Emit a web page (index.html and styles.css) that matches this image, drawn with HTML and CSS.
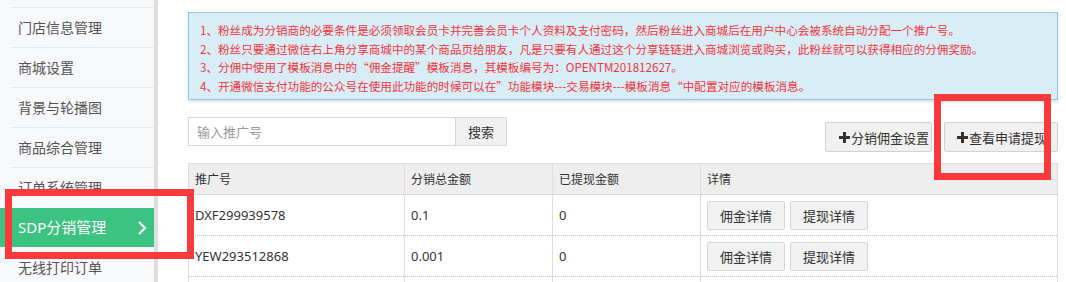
FILE: index.html
```html
<!DOCTYPE html>
<html lang="zh-CN">
<head>
  <meta charset="UTF-8" />
  <title>SDP分销管理</title>
  <link rel="stylesheet" href="styles.css">
</head>
<body>

  <div class="layout">
    <!-- 左侧菜单 -->
    <div class="sidebar">
      <div class="nav-item">门店信息管理</div>
      <div class="nav-item">商城设置</div>
      <div class="nav-item">背景与轮播图</div>
      <div class="nav-item">商品综合管理</div>
      <div class="nav-item">订单系统管理</div>
      <div class="nav-item active">
        SDP分销管理
        <svg class="chev" width="10" height="14" viewBox="0 0 10 14"><polyline points="2,1 8,7 2,13" fill="none" stroke="#fff" stroke-width="2.2"/></svg>
      </div>
      <div class="nav-item">无线打印订单</div>
    </div>

    <!-- 内容 -->
    <div class="main">
      <div class="notice">
        <p>1、粉丝成为分销商的必要条件是必须领取会员卡并完善会员卡个人资料及支付密码，然后粉丝进入商城后在用户中心会被系统自动分配一个推广号。</p>
        <p>2、粉丝只要通过微信右上角分享商城中的某个商品页给朋友，凡是只要有人通过这个分享链链进入商城浏览或购买，此粉丝就可以获得相应的分佣奖励。</p>
        <p>3、分佣中使用了模板消息中的“佣金提醒”模板消息，其模板编号为：OPENTM201812627。</p>
        <p>4、开通微信支付功能的公众号在使用此功能的时候可以在”功能模块---交易模块---模板消息“中配置对应的模板消息。</p>
      </div>

      <div class="toolbar">
        <div class="search">
          <input type="text" placeholder="输入推广号">
          <button class="btn-search">搜索</button>
        </div>
        <div class="actions">
          <button class="btn"><svg width="11" height="11" viewBox="0 0 11 11"><rect x="4" y="0" width="3" height="11" fill="#333"/><rect x="0" y="4" width="11" height="3" fill="#333"/></svg>分销佣金设置</button>
          <button class="btn wide"><svg width="11" height="11" viewBox="0 0 11 11"><rect x="4" y="0" width="3" height="11" fill="#333"/><rect x="0" y="4" width="11" height="3" fill="#333"/></svg>查看申请提现</button>
        </div>
      </div>

      <table class="list">
        <thead>
          <tr>
            <th class="c1">推广号</th>
            <th class="c2">分销总金额</th>
            <th class="c3">已提现金额</th>
            <th>详情</th>
          </tr>
        </thead>
        <tbody>
          <tr>
            <td>DXF299939578</td>
            <td>0.1</td>
            <td>0</td>
            <td><button class="btn-sm">佣金详情</button><button class="btn-sm">提现详情</button></td>
          </tr>
          <tr>
            <td>YEW293512868</td>
            <td>0.001</td>
            <td>0</td>
            <td><button class="btn-sm">佣金详情</button><button class="btn-sm">提现详情</button></td>
          </tr>
          <tr>
            <td></td>
            <td></td>
            <td></td>
            <td></td>
          </tr>
        </tbody>
      </table>
    </div>
  </div>

  <!-- 标注框 -->
  <div class="mark mark-nav"></div>
  <div class="mark mark-btn"></div>

</body>
</html>
```

FILE: styles.css
```css
* { margin: 0; padding: 0; box-sizing: border-box; }
html, body {
  width: 100%;
  height: 100%;
  background: #fff;
  font-family: "Noto Sans", "Noto Sans CJK SC", sans-serif;
  color: #333;
  overflow: hidden;
}
.layout { display: flex; min-height: 100%; }

/* 左侧菜单 */
.sidebar {
  width: 158px;
  flex-shrink: 0;
  background: #f7f8fa;
  border-right: 4px solid #dedede;
  padding-top: 7px;
}
.nav-item {
  height: 40px;
  margin-left: 10px;
  padding-left: 8px;
  border-top: 1px solid #e9eaed;
  font-size: 14px;
  line-height: 39px;
  color: #555;
}
.nav-item.active {
  margin-left: 0;
  padding-left: 18px;
  border-top: 1px solid #f7f8fa;
  background: #3cc281;
  color: #fff;
  font-size: 15px;
  position: relative;
}
.nav-item.active .chev { position: absolute; left: 137px; top: 13px; }
.nav-item.active + .nav-item { border-top-color: #f7f8fa; }

/* 内容 */
.main {
  flex: 1;
  padding: 12px 8px 0 30px;
}
.notice {
  background: #d9edf7;
  border: 1px solid #8cc7e6;
  box-shadow: 0 2px 3px rgba(0, 0, 0, 0.12);
  padding: 8px 11px 4px;
  height: 88px;
  font-family: "Noto Sans CJK SC", sans-serif;
  font-size: 11.6px;
  line-height: 18.5px;
  color: #f0353a;
  white-space: nowrap;
}

.toolbar {
  display: flex;
  justify-content: space-between;
  margin-top: 17px;
}
.search { display: flex; }
.search input {
  width: 268px;
  height: 29px;
  border: 1px solid #d6d6d6;
  padding-left: 8px;
  font-family: inherit;
  font-size: 13px;
  color: #333;
}
.search input::placeholder { color: #999; }
.btn-search {
  width: 51px;
  height: 29px;
  border: 1px solid #dcdcdc;
  border-left: none;
  background: #f0f0f0;
  font-family: inherit;
  font-size: 13px;
  color: #333;
}
.actions { display: flex; gap: 12px; margin-top: 5px; }
.btn {
  display: flex;
  align-items: center;
  gap: 1px;
  width: 107px;
  height: 30px;
  padding-left: 13px;
  border: 1px solid #d2d2d2;
  border-radius: 2px;
  background: #f1f1f1;
  font-family: inherit;
  font-size: 13px;
  color: #333;
  white-space: nowrap;
}
.btn.wide { width: 114px; padding-left: 12px; }

.list {
  width: 100%;
  margin-top: 11px;
  border-collapse: collapse;
  border: 1px solid #dddddd;
  font-size: 13px;
}
.list th {
  height: 31px;
  background: #eeeeee;
  border-left: 1px solid #dddddd;
  padding-left: 6px;
  text-align: left;
  font-weight: normal;
  font-size: 12px;
  color: #333;
}
.list td {
  height: 41px;
  border-left: 1px solid #dddddd;
  border-top: 1px dotted #c8c8c8;
  padding-left: 6px;
  color: #333;
}
.list .c1 { width: 216px; }
.list .c2 { width: 148px; }
.list .c3 { width: 148px; }
.btn-sm {
  width: 78px;
  height: 29px;
  margin-right: 5px;
  border: 1px solid #d6d6d6;
  border-radius: 2px;
  background: #f1f1f1;
  font-family: inherit;
  font-size: 13px;
  color: #333;
  vertical-align: middle;
}

/* 红色标注框 */
.mark {
  position: absolute;
  border: 7px solid #fa3a3a;
}
.mark-nav { left: 5px; top: 189px; width: 189px; height: 70px; }
.mark-btn { left: 934px; top: 94px; width: 117px; height: 86px; }
```
